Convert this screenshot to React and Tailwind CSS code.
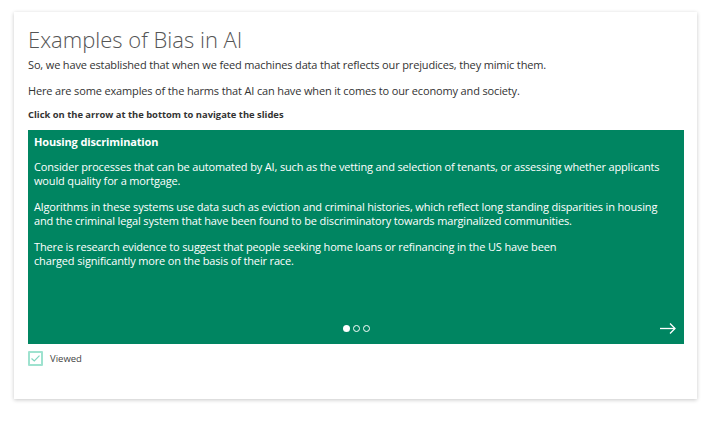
import React from "react";

export default function App() {
  const font = { fontFamily: '"Open Sans", "Liberation Sans", sans-serif' };
  return (
    <div className="w-[714px] h-[433px] bg-white pt-[12px] pl-[14px]" style={font}>
      <div className="w-[683px] h-[387px] bg-white shadow-[0_1px_4px_rgba(0,0,0,0.22)] pt-[12px] pl-[14px] pr-[13px]">
        <h1 className="text-[22px] leading-[30px] font-light text-[#555]">Examples of Bias in AI</h1>
        <p className="mt-[4px] text-[11px] leading-[14px] tracking-[-0.15px] text-[#333]">
          So, we have established that when we feed machines data that reflects our prejudices, they mimic them.
        </p>
        <p className="mt-[12px] text-[11px] leading-[14px] tracking-[-0.15px] text-[#333]">
          Here are some examples of the harms that AI can have when it comes to our economy and society.
        </p>
        <p className="mt-[10px] text-[9.4px] leading-[14px] font-bold text-[#333]">
          Click on the arrow at the bottom to navigate the slides
        </p>
        <div className="mt-[8px] h-[214px] bg-[#008561] text-white flex flex-col px-[6px] pt-[5px] pb-[9px]">
          <h2 className="text-[11px] leading-[14px] tracking-[-0.15px] font-bold">Housing discrimination</h2>
          <div className="mt-[11px] text-[11px] leading-[14px] tracking-[-0.15px] flex flex-col gap-[12px]">
            <p>
              Consider processes that can be automated by AI, such as the vetting and selection of tenants, or assessing whether applicants would quality for a mortgage.
            </p>
            <p>
              Algorithms in these systems use data such as eviction and criminal histories, which reflect long standing disparities in housing and the criminal legal system that have been found to be discriminatory towards marginalized communities.
            </p>
            <p>
              There is research evidence to suggest that people seeking home loans or refinancing in the US have been
              <br />
              charged significantly more on the basis of their race.
            </p>
          </div>
          <div className="mt-auto grid grid-cols-[1fr_auto_1fr] items-center h-[14px]">
            <div />
            <div className="flex items-center gap-[3px]">
              <span className="w-[7px] h-[7px] rounded-full bg-white" />
              <span className="w-[7px] h-[7px] rounded-full border border-white" />
              <span className="w-[7px] h-[7px] rounded-full border border-white" />
            </div>
            <div className="flex justify-end pr-[2px]">
              <svg width="16" height="11" viewBox="0 0 16 11" fill="none" stroke="white" strokeWidth="1.3">
                <path d="M0 5.5H15" />
                <path d="M10 0.5L15 5.5L10 10.5" />
              </svg>
            </div>
          </div>
        </div>
        <div className="mt-[7px] flex items-center gap-[7px]">
          <div className="w-[15px] h-[15px] border-2 border-[#9ee2cf] rounded-[1px] flex items-center justify-center">
            <svg width="9" height="7" viewBox="0 0 9 7" fill="none" stroke="#7fd6bf" strokeWidth="1.2">
              <path d="M0.5 3.5L3.3 6L8.5 0.7" />
            </svg>
          </div>
          <span className="text-[9.5px] leading-[14px] text-[#444]">Viewed</span>
        </div>
      </div>
    </div>
  );
}
